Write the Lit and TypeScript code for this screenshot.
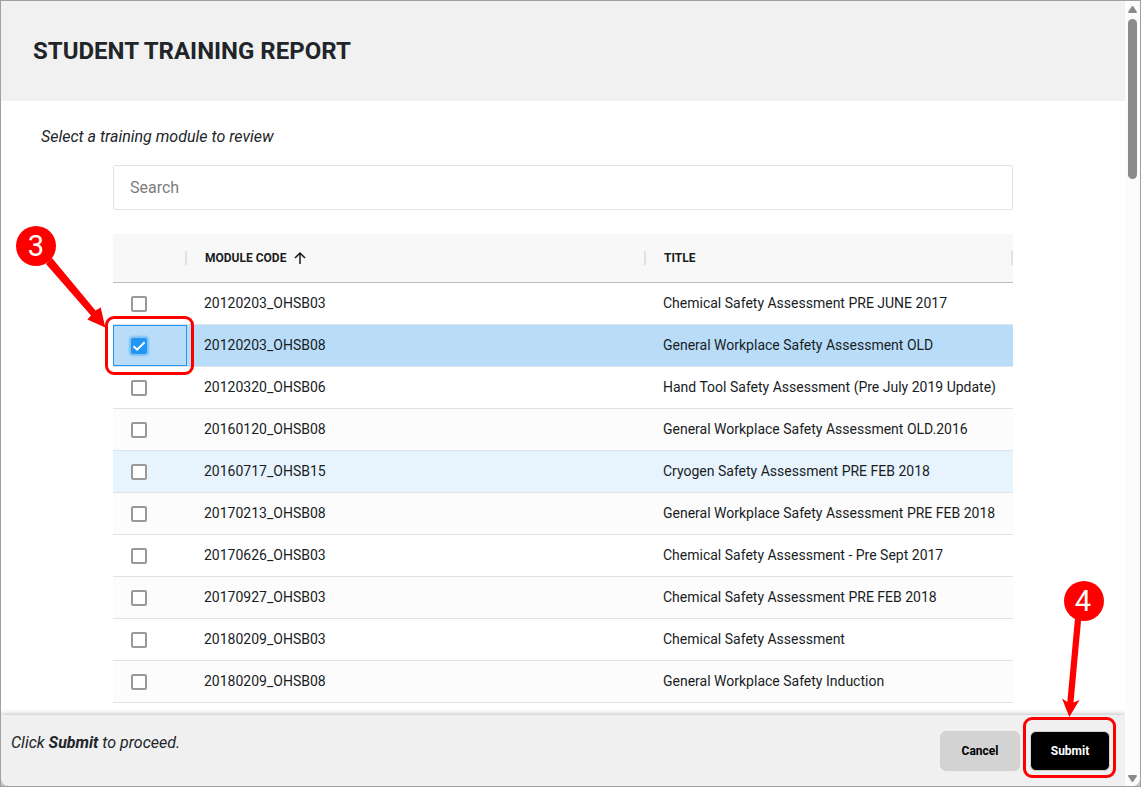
import { LitElement, html, css, nothing } from "lit";
import { customElement, state } from "lit/decorators.js";
import { classMap } from "lit/directives/class-map.js";

interface TrainingModule {
  id: number;
  code: string;
  title: string;
}

const MODULES: TrainingModule[] = [
  { id: 1, code: "20120203_OHSB03", title: "Chemical Safety Assessment PRE JUNE 2017" },
  { id: 2, code: "20120203_OHSB08", title: "General Workplace Safety Assessment OLD" },
  { id: 3, code: "20120320_OHSB06", title: "Hand Tool Safety Assessment (Pre July 2019 Update)" },
  { id: 4, code: "20160120_OHSB08", title: "General Workplace Safety Assessment OLD.2016" },
  { id: 5, code: "20160717_OHSB15", title: "Cryogen Safety Assessment PRE FEB 2018" },
  { id: 6, code: "20170213_OHSB08", title: "General Workplace Safety Assessment PRE FEB 2018" },
  { id: 7, code: "20170626_OHSB03", title: "Chemical Safety Assessment - Pre Sept 2017" },
  { id: 8, code: "20170927_OHSB03", title: "Chemical Safety Assessment PRE FEB 2018" },
  { id: 9, code: "20180209_OHSB03", title: "Chemical Safety Assessment" },
  { id: 10, code: "20180209_OHSB08", title: "General Workplace Safety Induction" },
];

@customElement("module-grid")
export class ModuleGrid extends LitElement {
  static styles = css`
    :host {
      display: block;
    }
    .grid {
      width: 100%;
      table-layout: fixed;
      border-collapse: separate;
      border-spacing: 0;
      font-size: 14px;
      line-height: 20px;
      color: #181d1f;
    }
    .col-select {
      width: 74px;
    }
    .col-code {
      width: 51%;
    }
    .head {
      position: relative;
      height: 49px;
      box-sizing: border-box;
      padding: 0 18px;
      text-align: left;
      font-size: 12px;
      font-weight: 700;
      background: #f8f8f8;
      border-bottom: 1px solid #babfc7;
    }
    .head::after {
      content: "";
      position: absolute;
      right: 0;
      top: 17px;
      width: 2px;
      height: 14px;
      background: #dde2eb;
    }
    .label {
      display: flex;
      align-items: center;
      gap: 7px;
    }
    .arrow {
      display: block;
      width: 14px;
      height: 14px;
      fill: none;
      stroke: #181d1f;
      stroke-width: 1.5;
    }
    .cell {
      position: relative;
      height: 42px;
      box-sizing: border-box;
      padding: 0 16px 2px 17px;
      white-space: nowrap;
      background: #fff;
      border-bottom: 1px solid #dde2eb;
    }
    .odd .cell {
      background: #fcfcfc;
    }
    .hover .cell {
      background: #e7f4fe;
    }
    .picked .cell {
      background: #b9ddf9;
    }
    .picked .focus {
      box-shadow: inset 0 0 0 1px #2196f3;
    }
    .step {
      z-index: 1;
    }
    .tick {
      display: block;
      appearance: none;
      width: 16px;
      height: 16px;
      margin: 2px 0 0 1px;
      box-sizing: border-box;
      border: 2px solid #999;
      border-radius: 2px;
      background: #fff;
    }
    .tick:checked {
      border: 0;
      background: #2196f3
        url("data:image/svg+xml,%3Csvg xmlns='http://www.w3.org/2000/svg' viewBox='0 0 16 16'%3E%3Cpath d='M2.6 8.2 6.1 11.7 13.6 4.2' fill='none' stroke='white' stroke-width='2'/%3E%3C/svg%3E");
      box-shadow: 0 0 2px 2px rgba(33, 150, 243, 0.4);
    }
    .ring {
      position: absolute;
      left: -8px;
      top: -9px;
      width: 89px;
      height: 59px;
      box-sizing: border-box;
      border: 3px solid #f00;
      border-radius: 9px;
      pointer-events: none;
    }
    .callout {
      position: absolute;
      left: -98px;
      top: -100px;
      width: 92px;
      height: 104px;
      pointer-events: none;
    }
    .number {
      font: 29px Roboto, "Liberation Sans", sans-serif;
      fill: #fff;
      text-anchor: middle;
    }
  `;

  @state() private selected = 2;

  private step() {
    return html`
      <span class="ring"></span>
      <svg class="callout" viewBox="15 225 92 104">
        <path d="M46 264 52 258 95.500 310.500 100.700 307.500 105.300 327.500 87.300 319.500 91 315.500Z" fill="#f00" />
        <circle cx="36" cy="246" r="20" fill="#f00" />
        <text class="number" x="36" y="256">3</text>
      </svg>
    `;
  }

  render() {
    return html`
      <table class="grid">
        <colgroup>
          <col class="col-select" />
          <col class="col-code" />
          <col />
        </colgroup>
        <thead>
          <tr>
            <th class="head" scope="col"></th>
            <th class="head" scope="col" aria-sort="ascending">
              <span class="label">
                MODULE CODE
                <svg class="arrow" viewBox="0 0 14 14" aria-hidden="true">
                  <path d="M7 13V2M2 7 7 2 12 7" />
                </svg>
              </span>
            </th>
            <th class="head" scope="col">TITLE</th>
          </tr>
        </thead>
        <tbody>
          ${MODULES.map((m, i) => {
            const picked = m.id === this.selected;
            const marked = m.id === 2;
            return html`
              <tr class=${classMap({ odd: i % 2 === 1, hover: m.id === 5, picked })}>
                <td class=${classMap({ cell: true, focus: true, step: marked })}>
                  <input
                    class="tick"
                    type="checkbox"
                    aria-labelledby="code-${m.id}"
                    .checked=${picked}
                    @change=${() => (this.selected = picked ? 0 : m.id)}
                  />
                  ${marked ? this.step() : nothing}
                </td>
                <td class="cell" id="code-${m.id}">${m.code}</td>
                <td class="cell">${m.title}</td>
              </tr>
            `;
          })}
        </tbody>
      </table>
    `;
  }
}

@customElement("app-root")
export class AppRoot extends LitElement {
  static styles = css`
    :host {
      display: block;
      height: 100vh;
      box-sizing: border-box;
      border: 1px solid #a0a0a0;
      background: #c4c4c4;
      font-family: Roboto, "Liberation Sans", sans-serif;
      color: #212529;
    }
    .window {
      display: flex;
      height: 100%;
      overflow: hidden;
      border-radius: 0 0 8px 8px;
      background: #fff;
    }
    .page {
      flex: 1;
      min-width: 0;
      display: flex;
      flex-direction: column;
      overflow: hidden;
    }
    .banner {
      padding: 34px 32px;
      background: #f1f1f1;
    }
    .title {
      margin: 0;
      font-size: 24px;
      line-height: 32px;
      font-weight: 700;
    }
    .main {
      flex: 1;
      min-height: 0;
      overflow: hidden;
    }
    .intro {
      margin: 0;
      padding: 24px 40px 16px;
      font-size: 16px;
      line-height: 24px;
      font-style: italic;
    }
    .content {
      display: flex;
      flex-direction: column;
      gap: 24px;
      max-width: 900px;
      margin: 0 auto;
    }
    .search {
      width: 100%;
      height: 45px;
      box-sizing: border-box;
      padding: 0 16px;
      border: 1px solid #e2e2e2;
      border-radius: 2px;
      font: 16px Roboto, "Liberation Sans", sans-serif;
      color: #212529;
    }
    .search::placeholder {
      color: #7d7d7d;
    }
    .footer {
      position: relative;
      display: flex;
      justify-content: space-between;
      padding: 16px 15px 15px 10px;
      background: #f0f0f0;
      box-shadow: 0 0 6px rgba(0, 0, 0, 0.35);
    }
    .hint {
      margin: 0;
      font-size: 16px;
      line-height: 24px;
      font-style: italic;
    }
    .actions {
      position: relative;
      display: flex;
      gap: 10px;
    }
    .button {
      width: 80px;
      height: 40px;
      padding: 0;
      border: 1px solid #d8d0c8;
      border-radius: 6px;
      background: #d3d3d3;
      color: #000;
      font: 700 12px Roboto, "Liberation Sans", sans-serif;
    }
    .primary {
      background: #000;
      color: #fff;
    }
    .ring {
      position: absolute;
      right: -6px;
      top: -14px;
      width: 93px;
      height: 61px;
      box-sizing: border-box;
      border: 3px solid #f00;
      border-radius: 9px;
      pointer-events: none;
    }
    .callout {
      position: absolute;
      right: 5px;
      top: -151px;
      width: 44px;
      height: 137px;
      pointer-events: none;
    }
    .number {
      font: 29px Roboto, "Liberation Sans", sans-serif;
      fill: #fff;
      text-anchor: middle;
    }
    .scrollbar {
      display: flex;
      flex-direction: column;
      justify-content: space-between;
      align-items: center;
      width: 15px;
      box-sizing: border-box;
      padding: 5px 0 4px;
      background: #fcfcfc;
    }
    .top {
      display: flex;
      flex-direction: column;
      gap: 6px;
    }
    .thumb {
      width: 9px;
      height: 160px;
      border-radius: 5px;
      background: #8b8b8b;
    }
    .tip {
      display: block;
      width: 9px;
      height: 7px;
      fill: #8b8b8b;
    }
  `;

  render() {
    return html`
      <div class="window">
        <div class="page">
          <header class="banner">
            <h1 class="title">STUDENT TRAINING REPORT</h1>
          </header>
          <main class="main">
            <p class="intro">Select a training module to review</p>
            <div class="content">
              <input class="search" type="search" placeholder="Search" aria-label="Search" />
              <module-grid></module-grid>
            </div>
          </main>
          <footer class="footer">
            <p class="hint">Click <strong>Submit</strong> to proceed.</p>
            <div class="actions">
              <button class="button" type="button">Cancel</button>
              <button class="button primary" type="submit">Submit</button>
              <span class="ring"></span>
              <svg class="callout" viewBox="1061 580 44 137">
                <path d="M1075 618H1081.300L1073.500 702.500 1079.500 700 1069.300 717 1062 698.500 1067.300 702Z" fill="#f00" />
                <circle cx="1084" cy="601" r="20" fill="#f00" />
                <text class="number" x="1083" y="611">4</text>
              </svg>
            </div>
          </footer>
        </div>
        <div class="scrollbar" aria-hidden="true">
          <div class="top">
            <svg class="tip" viewBox="0 0 9 7"><path d="M4.500 0Q5 0 5.400.6L8.800 5.800Q9.200 7 8 7H1Q-.2 7 .2 5.800L3.600.6Q4 0 4.500 0Z" /></svg>
            <div class="thumb"></div>
          </div>
          <svg class="tip" viewBox="0 0 9 7"><path d="M4.500 7Q5 7 5.400 6.400L8.800 1.200Q9.200 0 8 0H1Q-.2 0 .2 1.200L3.600 6.400Q4 7 4.500 7Z" /></svg>
        </div>
      </div>
    `;
  }
}
